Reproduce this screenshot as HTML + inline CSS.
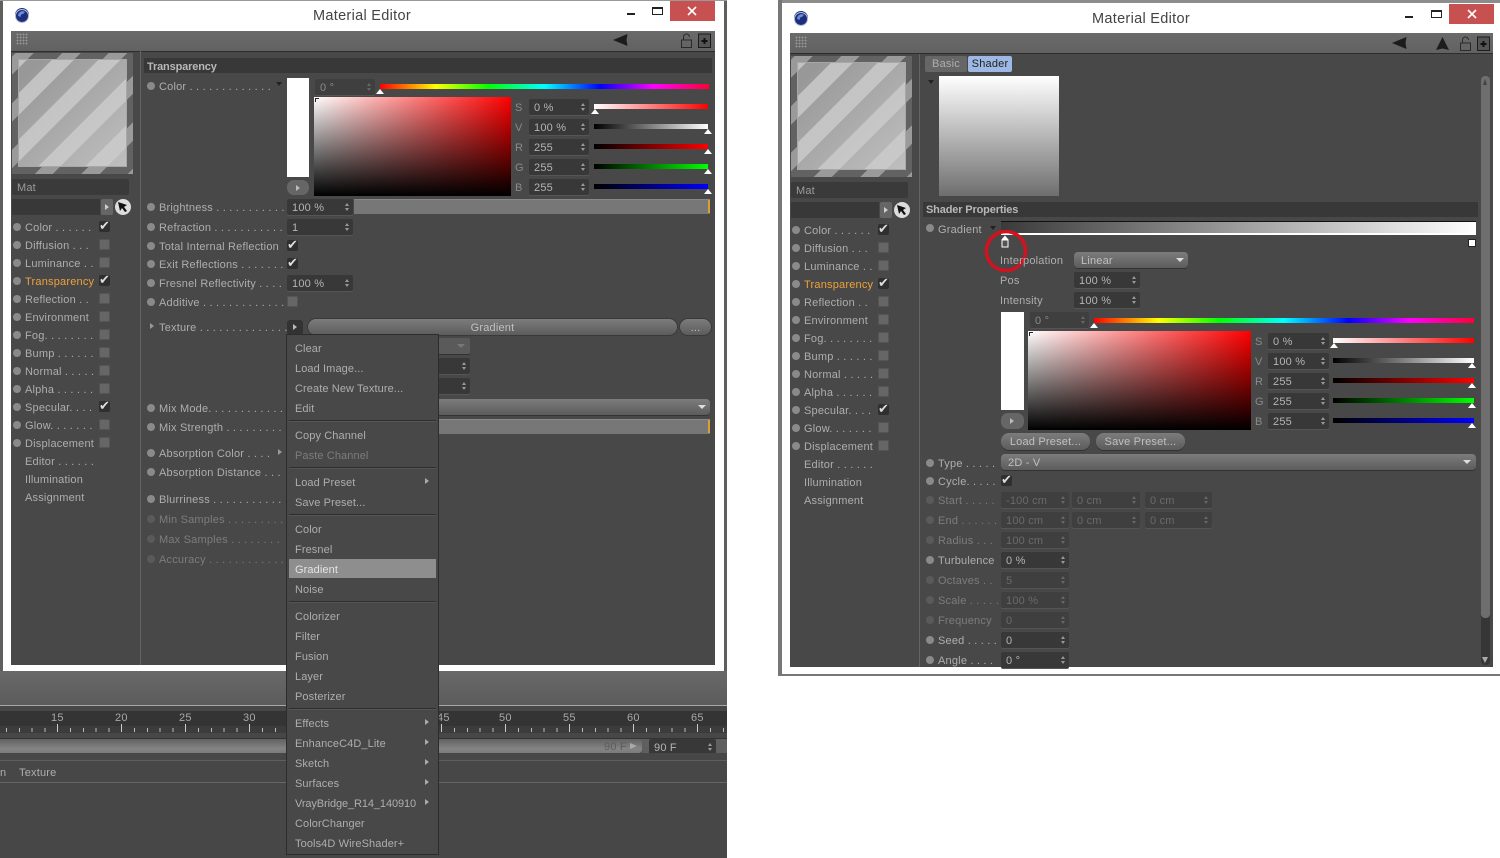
<!DOCTYPE html>
<html><head><meta charset="utf-8"><title>Material Editor</title>
<style>
html,body{margin:0;padding:0;background:#fff}
#p{position:relative;width:1500px;height:858px;overflow:hidden;background:#fff;font:11px "Liberation Sans",sans-serif;color:#aeaeae;letter-spacing:.2px}
#p div,#p span,#p svg{position:absolute}
.a{position:absolute}
.l{height:14px;line-height:16px;white-space:pre}
.b{width:8px;height:8px;border-radius:50%;background:#8a8a8a}
.bd{width:8px;height:8px;border-radius:50%;background:#5a5a5a}
.f{height:16px;line-height:18px;background:#383838;border-radius:2px;padding-left:5px;box-sizing:border-box;box-shadow:0 1px 0 #555;color:#b4b4b4;white-space:pre}
.f:before,.f:after{content:"";position:absolute;right:4px;border-left:2.5px solid transparent;border-right:2.5px solid transparent}
.f:before{top:4px;border-bottom:3px solid #999}
.f:after{top:9px;border-top:3px solid #999}
.fd{background:#3f3f3f;color:#6a6a6a}
.fd:before{border-bottom-color:#666}.fd:after{border-top-color:#666}
.c{width:11px;height:11px;border-radius:2px;background:#666;box-shadow:inset 0 0 0 1px #555}
.k{background:#2f2f2f;box-shadow:none;color:#ddd;font:13px/11px "DejaVu Sans",sans-serif;text-align:center;letter-spacing:0}
.s{height:5px}
.m{width:0;height:0;border-left:4px solid transparent;border-right:4px solid transparent;border-bottom:5px solid #fff}
.h{height:15px;line-height:17px;background:#383838;color:#b8b8b8;padding-left:3px;box-sizing:border-box;font-weight:bold;font-size:11px;letter-spacing:-.15px}
.g{background:linear-gradient(#7c7c7c,#5c5c5c);border-radius:4px;box-shadow:0 1px 0 #333;color:#c0c0c0}
.hue{background:linear-gradient(90deg,#f00,#ff0 17%,#0f0 33%,#0ff 50%,#00f 67%,#f0f 83%,#f03)}
.sq{background:linear-gradient(transparent,#000),linear-gradient(90deg,#fff,#f00)}
.sl{background:#777;box-shadow:inset 0 1px 0 #888}
.sl:after{content:"";position:absolute;right:0;top:1px;bottom:1px;width:2px;background:#d8a030}
.prev{background:repeating-linear-gradient(135deg,#626262 0 2.5px,#9a9a9a 2.5px 15.5px,#626262 15.5px 33px)}
.prev i{position:absolute;left:7px;top:7px;width:107px;height:106px;background:linear-gradient(135deg,rgba(200,200,200,0) 10%,rgba(204,204,204,.75)),repeating-linear-gradient(135deg,#c2c2c2 0 5.6px,#989898 5.6px 23px,#c2c2c2 23px 33px);box-shadow:0 0 0 1px #a8a8a8}
.mi{left:295px;height:14px;line-height:16px;color:#aeaeae;white-space:pre;letter-spacing:.1px}
.sep{left:289px;width:147px;height:1px;background:#2e2e2e;box-shadow:0 1px 0 #555}
.ar{left:425px;width:0;height:0;border-left:4px solid #aaa;border-top:3.5px solid transparent;border-bottom:3.5px solid transparent}
.tn{color:#a8a8a8;font-size:11px;top:712px;line-height:12px}
.gr{width:12px;height:12px;background:radial-gradient(circle,#959595 .8px,transparent 1px) 0 0/3px 3px}
</style></head><body><div id="p">

<!-- left screenshot background -->
<div style="left:0;top:0;width:727px;height:858px;background:#5f5f5f"></div>
<div style="left:0;top:0;width:727px;height:1px;background:#999"></div>
<div style="left:3px;top:1px;width:721px;height:670px;background:#fff"></div>
<div style="left:0;top:671px;width:727px;height:34px;background:linear-gradient(#686868,#5c5c5c)"></div>
<div style="left:0;top:705px;width:727px;height:1px;background:#a8a8a8"></div>
<div style="left:0;top:706px;width:727px;height:5px;background:#474747"></div>
<div style="left:0;top:711px;width:727px;height:16px;background:#343434"></div>
<div style="left:0;top:726px;width:727px;height:7px;background:#3c3c3c"></div>
<div style="left:0;top:728px;width:727px;height:4px;background:repeating-linear-gradient(90deg,#bbb 0 1px,transparent 1px 12.8px);background-position:6px 0"></div>
<div style="left:57px;top:724px;width:650px;height:8px;background:repeating-linear-gradient(90deg,#ccc 0 1px,transparent 1px 64px)"></div>
<div style="left:0;top:733px;width:727px;height:5px;background:#474747;box-shadow:0 1px 0 #333"></div>
<div style="left:0;top:739px;width:642px;height:14px;border-radius:0 3px 3px 0;background:linear-gradient(#626262,#848484 70%,#7a7a7a);box-shadow:0 1px 0 #333"></div>
<div class="l" style="left:604px;top:739px;color:#5c5c5c">90 F</div>
<div style="left:630px;top:743px;width:0;height:0;border-left:7px solid #aaa;border-top:3px solid transparent;border-bottom:3px solid transparent"></div>
<div class="f" style="left:649px;top:739px;width:67px">90 F</div>
<div style="left:0;top:753px;width:727px;height:105px;background:#474747"></div>
<div style="left:0;top:760px;width:727px;height:1px;background:#5e5e5e"></div>
<div style="left:0;top:782px;width:727px;height:1px;background:#666"></div>
<div class="l" style="left:0;top:765px">n</div>
<div class="l" style="left:19px;top:765px">Texture</div>
<div class="a tn" style="left:51px">15</div><div class="a tn" style="left:115px">20</div><div class="a tn" style="left:179px">25</div><div class="a tn" style="left:243px">30</div><div class="a tn" style="left:437px">45</div><div class="a tn" style="left:499px">50</div><div class="a tn" style="left:563px">55</div><div class="a tn" style="left:627px">60</div><div class="a tn" style="left:691px">65</div>

<!-- LEFT WINDOW -->
<div style="left:11px;top:31px;width:704px;height:634px;background:#484848"></div>
<div style="left:11px;top:31px;width:704px;height:20px;background:linear-gradient(#6a6a6a,#626262);box-shadow:0 1px 0 #2e2e2e"></div>
<div class="gr" style="left:16px;top:33px"></div>
<svg style="left:14px;top:7px" width="16" height="16" viewBox="0 0 16 16"><circle cx="8" cy="8" r="7" fill="#1b2f7a"/><circle cx="8" cy="9" r="6.5" fill="none" stroke="#b8bfd8" stroke-width="1"/><path d="M4 9a4.5 4.5 0 0 1 7-4l-2 2a2 2 0 0 0-2 3z" fill="#6d8be0"/></svg>
<div style="left:313px;top:7px;font-size:14.5px;line-height:18px;color:#444;letter-spacing:.3px">Material Editor</div>
<div style="left:627px;top:13px;width:8px;height:2px;background:#222"></div>
<div style="left:652px;top:7px;width:11px;height:8px;box-sizing:border-box;border:1px solid #222;border-top-width:2px"></div>
<div style="left:670px;top:1px;width:45px;height:20px;background:#c75050"></div>
<svg style="left:687px;top:6px" width="10" height="10" viewBox="0 0 10 10"><path d="M1 1l8 8M9 1l-8 8" stroke="#fff" stroke-width="1.6"/></svg>
<svg style="left:612px;top:33px" width="18" height="14" viewBox="0 0 18 14"><path d="M1 7L15.500 1 14.500 7 15.500 13z" fill="#1c1c1c"/></svg>
<svg style="left:680px;top:33px" width="14" height="16" viewBox="0 0 14 16"><rect x="1.5" y="7" width="10" height="7.5" fill="none" stroke="#2a2a2a"/><path d="M3.5 7V4a3 3 0 0 1 6 0" fill="none" stroke="#2a2a2a"/></svg>
<svg style="left:698px;top:33px" width="13" height="15" viewBox="0 0 13 15"><rect x=".5" y="1" width="12" height="13.5" fill="#555" stroke="#1c1c1c"/><path d="M6.5 5v6M3.5 8h6" stroke="#111" stroke-width="2"/></svg>

<div class="prev" style="left:12px;top:53px;width:121px;height:121px"><i></i></div>
<div style="left:140px;top:51px;width:1px;height:614px;background:#646464"></div>
<div class="a" style="left:12px;top:179px;width:117px;height:16px;background:#3a3a3a;border-radius:2px;line-height:19px;padding-left:5px;box-sizing:border-box;color:#9c9c9c">Mat</div>
<div style="left:12px;top:199px;width:88px;height:16px;background:#383838"></div>
<div style="left:101px;top:199px;width:12px;height:16px;background:#666;border-radius:2px"></div>
<div style="left:105px;top:204px;width:0;height:0;border-left:4px solid #ccc;border-top:3px solid transparent;border-bottom:3px solid transparent"></div>
<div style="left:115px;top:199px;width:16px;height:16px;border-radius:50%;background:#ddd"></div>
<svg style="left:117px;top:201px" width="12" height="12" viewBox="0 0 12 12"><path d="M1 1l9 3-3 2 3 4-2 1-3-4-2 3z" fill="#111"/></svg>

<div class="b" style="left:13px;top:223px"></div><div class="l" style="left:25px;top:220px">Color . . . . . .</div><div class="c k" style="left:99px;top:221px">✔</div>
<div class="b" style="left:13px;top:241px"></div><div class="l" style="left:25px;top:238px">Diffusion . . .</div><div class="c" style="left:99px;top:239px"></div>
<div class="b" style="left:13px;top:259px"></div><div class="l" style="left:25px;top:256px">Luminance . .</div><div class="c" style="left:99px;top:257px"></div>
<div class="b" style="left:13px;top:277px"></div><div class="l" style="left:25px;top:274px;color:#eda23a">Transparency</div><div class="c k" style="left:99px;top:275px">✔</div>
<div class="b" style="left:13px;top:295px"></div><div class="l" style="left:25px;top:292px">Reflection . .</div><div class="c" style="left:99px;top:293px"></div>
<div class="b" style="left:13px;top:313px"></div><div class="l" style="left:25px;top:310px">Environment</div><div class="c" style="left:99px;top:311px"></div>
<div class="b" style="left:13px;top:331px"></div><div class="l" style="left:25px;top:328px">Fog. . . . . . . .</div><div class="c" style="left:99px;top:329px"></div>
<div class="b" style="left:13px;top:349px"></div><div class="l" style="left:25px;top:346px">Bump . . . . . .</div><div class="c" style="left:99px;top:347px"></div>
<div class="b" style="left:13px;top:367px"></div><div class="l" style="left:25px;top:364px">Normal . . . . .</div><div class="c" style="left:99px;top:365px"></div>
<div class="b" style="left:13px;top:385px"></div><div class="l" style="left:25px;top:382px">Alpha . . . . . .</div><div class="c" style="left:99px;top:383px"></div>
<div class="b" style="left:13px;top:403px"></div><div class="l" style="left:25px;top:400px">Specular. . . .</div><div class="c k" style="left:99px;top:401px">✔</div>
<div class="b" style="left:13px;top:421px"></div><div class="l" style="left:25px;top:418px">Glow. . . . . . .</div><div class="c" style="left:99px;top:419px"></div>
<div class="b" style="left:13px;top:439px"></div><div class="l" style="left:25px;top:436px">Displacement</div><div class="c" style="left:99px;top:437px"></div>
<div class="l" style="left:25px;top:454px">Editor . . . . . .</div>
<div class="l" style="left:25px;top:472px">Illumination</div>
<div class="l" style="left:25px;top:490px">Assignment</div>

<div class="h" style="left:144px;top:58px;width:568px;line-height:18px">Transparency</div>
<div class="b" style="left:147px;top:82px"></div><div class="l" style="left:159px;top:79px">Color . . . . . . . . . . . . .</div>
<div style="left:276px;top:82px;width:0;height:0;border-top:4px solid #222;border-left:3px solid transparent;border-right:3px solid transparent"></div>
<div style="left:287px;top:78px;width:22px;height:99px;background:#fff"></div>
<div style="left:287px;top:180px;width:22px;height:15px;border-radius:7px;background:#666"></div>
<div style="left:296px;top:185px;width:0;height:0;border-left:4px solid #bbb;border-top:3px solid transparent;border-bottom:3px solid transparent"></div>
<div class="f fd" style="left:315px;top:79px;width:60px;color:#8a8a8a">0 °</div>
<div class="s hue" style="left:380px;top:84px;width:329px"></div><div class="m" style="left:376px;top:89px"></div>
<div class="sq" style="left:314px;top:97px;width:197px;height:99px"></div>
<div style="left:315px;top:98px;width:3px;height:3px;border-left:1px solid #222;border-top:1px solid #222"></div>

<div class="l" style="left:515px;top:100px;color:#8a8a8a">S</div><div class="f" style="left:529px;top:99px;width:60px">0 %</div>
<div class="s" style="left:594px;top:104px;width:114px;background:linear-gradient(90deg,#fff,#f00)"></div><div class="m" style="left:591px;top:109px"></div>
<div class="l" style="left:515px;top:120px;color:#8a8a8a">V</div><div class="f" style="left:529px;top:119px;width:60px">100 %</div>
<div class="s" style="left:594px;top:124px;width:114px;background:linear-gradient(90deg,#000,#fff)"></div><div class="m" style="left:704px;top:129px"></div>
<div class="l" style="left:515px;top:140px;color:#8a8a8a">R</div><div class="f" style="left:529px;top:139px;width:60px">255</div>
<div class="s" style="left:594px;top:144px;width:114px;background:linear-gradient(90deg,#000,#f00)"></div><div class="m" style="left:704px;top:149px"></div>
<div class="l" style="left:515px;top:160px;color:#8a8a8a">G</div><div class="f" style="left:529px;top:159px;width:60px">255</div>
<div class="s" style="left:594px;top:164px;width:114px;background:linear-gradient(90deg,#000,#0f0)"></div><div class="m" style="left:704px;top:169px"></div>
<div class="l" style="left:515px;top:180px;color:#8a8a8a">B</div><div class="f" style="left:529px;top:179px;width:60px">255</div>
<div class="s" style="left:594px;top:184px;width:114px;background:linear-gradient(90deg,#000,#00f)"></div><div class="m" style="left:704px;top:189px"></div>

<div class="b" style="left:147px;top:203px"></div><div class="l" style="left:159px;top:200px">Brightness . . . . . . . . . . .</div>
<div class="f" style="left:287px;top:199px;width:66px">100 %</div><div class="sl" style="left:354px;top:199px;width:356px;height:15px"></div>
<div class="b" style="left:147px;top:223px"></div><div class="l" style="left:159px;top:220px">Refraction . . . . . . . . . . .</div>
<div class="f" style="left:287px;top:219px;width:66px">1</div>
<div class="b" style="left:147px;top:242px"></div><div class="l" style="left:159px;top:239px">Total Internal Reflection</div><div class="c k" style="left:287px;top:240px">✔</div>
<div class="b" style="left:147px;top:260px"></div><div class="l" style="left:159px;top:257px">Exit Reflections . . . . . . .</div><div class="c k" style="left:287px;top:258px">✔</div>
<div class="b" style="left:147px;top:279px"></div><div class="l" style="left:159px;top:276px">Fresnel Reflectivity . . . .</div>
<div class="f" style="left:287px;top:275px;width:66px">100 %</div>
<div class="b" style="left:147px;top:298px"></div><div class="l" style="left:159px;top:295px">Additive . . . . . . . . . . . . .</div><div class="c" style="left:287px;top:296px"></div>
<div style="left:150px;top:323px;width:0;height:0;border-left:4px solid #999;border-top:3.5px solid transparent;border-bottom:3.5px solid transparent"></div>
<div class="l" style="left:159px;top:320px">Texture . . . . . . . . . . . . . .</div>
<div style="left:287px;top:320px;width:16px;height:15px;background:#333;border-radius:3px"></div>
<div style="left:293px;top:324px;width:0;height:0;border-left:4px solid #bbb;border-top:3px solid transparent;border-bottom:3px solid transparent"></div>
<div class="g" style="left:308px;top:319px;width:369px;height:16px;line-height:19px;text-align:center;border-radius:8px;box-shadow:0 0 0 1px #3a3a3a">Gradient</div>
<div class="g" style="left:680px;top:319px;width:31px;height:16px;line-height:19px;text-align:center;border-radius:8px;box-shadow:0 0 0 1px #3a3a3a">...</div>
<div class="g" style="left:420px;top:338px;width:50px;height:16px;background:#5a5a5a;border-radius:2px"></div>
<div style="left:457px;top:344px;width:0;height:0;border-top:4px solid #777;border-left:4px solid transparent;border-right:4px solid transparent"></div>
<div class="f" style="left:420px;top:358px;width:50px"></div>
<div class="f" style="left:420px;top:378px;width:50px"></div>
<div class="b" style="left:147px;top:404px"></div><div class="l" style="left:159px;top:401px">Mix Mode. . . . . . . . . . . .</div>
<div class="g" style="left:420px;top:399px;width:290px;height:16px"></div>
<div style="left:698px;top:405px;width:0;height:0;border-top:4px solid #ddd;border-left:4px solid transparent;border-right:4px solid transparent"></div>
<div class="b" style="left:147px;top:423px"></div><div class="l" style="left:159px;top:420px">Mix Strength . . . . . . . . .</div>
<div class="sl" style="left:420px;top:419px;width:290px;height:15px"></div>
<div class="b" style="left:147px;top:449px"></div><div class="l" style="left:159px;top:446px">Absorption Color . . . .</div>
<div style="left:278px;top:449px;width:0;height:0;border-left:4px solid #999;border-top:3.5px solid transparent;border-bottom:3.5px solid transparent"></div>
<div class="b" style="left:147px;top:468px"></div><div class="l" style="left:159px;top:465px">Absorption Distance . . .</div>
<div class="b" style="left:147px;top:495px"></div><div class="l" style="left:159px;top:492px">Blurriness . . . . . . . . . . .</div>
<div class="bd" style="left:147px;top:515px"></div><div class="l" style="left:159px;top:512px;color:#7c7c7c">Min Samples . . . . . . . . .</div>
<div class="bd" style="left:147px;top:535px"></div><div class="l" style="left:159px;top:532px;color:#7c7c7c">Max Samples . . . . . . . .</div>
<div class="bd" style="left:147px;top:555px"></div><div class="l" style="left:159px;top:552px;color:#7c7c7c">Accuracy . . . . . . . . . . . .</div>

<!-- dropdown menu -->
<div style="left:287px;top:335px;width:151px;height:519px;background:#484848;box-shadow:0 0 0 1px #2c2c2c"></div>
<div class="mi" style="top:341px">Clear</div>
<div class="mi" style="top:361px">Load Image...</div>
<div class="mi" style="top:381px">Create New Texture...</div>
<div class="mi" style="top:401px">Edit</div>
<div class="sep" style="top:420px"></div>
<div class="mi" style="top:428px">Copy Channel</div>
<div class="mi" style="top:448px;color:#7c7c7c">Paste Channel</div>
<div class="sep" style="top:467px"></div>
<div class="mi" style="top:475px">Load Preset</div><div class="ar" style="top:478px"></div>
<div class="mi" style="top:495px">Save Preset...</div>
<div class="sep" style="top:514px"></div>
<div class="mi" style="top:522px">Color</div>
<div class="mi" style="top:542px">Fresnel</div>
<div style="left:289px;top:559px;width:147px;height:19px;background:#8e8e8e"></div>
<div class="mi" style="top:562px;color:#e4e4e4">Gradient</div>
<div class="mi" style="top:582px">Noise</div>
<div class="sep" style="top:601px"></div>
<div class="mi" style="top:609px">Colorizer</div>
<div class="mi" style="top:629px">Filter</div>
<div class="mi" style="top:649px">Fusion</div>
<div class="mi" style="top:669px">Layer</div>
<div class="mi" style="top:689px">Posterizer</div>
<div class="sep" style="top:708px"></div>
<div class="mi" style="top:716px">Effects</div><div class="ar" style="top:719px"></div>
<div class="mi" style="top:736px">EnhanceC4D_Lite</div><div class="ar" style="top:739px"></div>
<div class="mi" style="top:756px">Sketch</div><div class="ar" style="top:759px"></div>
<div class="mi" style="top:776px">Surfaces</div><div class="ar" style="top:779px"></div>
<div class="mi" style="top:796px;letter-spacing:-.1px">VrayBridge_R14_140910</div><div class="ar" style="top:799px"></div>
<div class="mi" style="top:816px">ColorChanger</div>
<div class="mi" style="top:836px">Tools4D WireShader+</div>

<!-- RIGHT WINDOW -->
<div style="left:778px;top:0;width:4px;height:676px;background:#777"></div>
<div style="left:782px;top:0;width:718px;height:3px;background:#8c8c8c"></div>
<div style="left:778px;top:674px;width:722px;height:2px;background:#777"></div>
<div style="left:790px;top:33px;width:703px;height:634px;background:#484848"></div>
<div style="left:790px;top:33px;width:703px;height:20px;background:linear-gradient(#6a6a6a,#626262);box-shadow:0 1px 0 #2e2e2e"></div>
<div class="gr" style="left:795px;top:36px"></div>
<svg style="left:793px;top:10px" width="16" height="16" viewBox="0 0 16 16"><circle cx="8" cy="8" r="7" fill="#1b2f7a"/><circle cx="8" cy="9" r="6.5" fill="none" stroke="#b8bfd8" stroke-width="1"/><path d="M4 9a4.5 4.5 0 0 1 7-4l-2 2a2 2 0 0 0-2 3z" fill="#6d8be0"/></svg>
<div style="left:1092px;top:10px;font-size:14.5px;line-height:18px;color:#444;letter-spacing:.3px">Material Editor</div>
<div style="left:1405px;top:16px;width:8px;height:2px;background:#222"></div>
<div style="left:1431px;top:10px;width:11px;height:8px;box-sizing:border-box;border:1px solid #222;border-top-width:2px"></div>
<div style="left:1449px;top:4px;width:45px;height:20px;background:#c75050"></div>
<svg style="left:1467px;top:9px" width="10" height="10" viewBox="0 0 10 10"><path d="M1 1l8 8M9 1l-8 8" stroke="#fff" stroke-width="1.6"/></svg>
<svg style="left:1391px;top:36px" width="18" height="14" viewBox="0 0 18 14"><path d="M1 7L15.500 1 14.500 7 15.500 13z" fill="#1c1c1c"/></svg>
<svg style="left:1435px;top:36px" width="15" height="15" viewBox="0 0 15 15"><path d="M7.500 1L14 14 7.500 12.500 1 14z" fill="#1c1c1c"/></svg>
<svg style="left:1459px;top:36px" width="14" height="16" viewBox="0 0 14 16"><rect x="1.500" y="7" width="10" height="7.500" fill="none" stroke="#2a2a2a"/><path d="M3.500 7V4a3 3 0 0 1 6 0" fill="none" stroke="#2a2a2a"/></svg>
<svg style="left:1477px;top:36px" width="13" height="15" viewBox="0 0 13 15"><rect x=".5" y="1" width="12" height="13.500" fill="#555" stroke="#1c1c1c"/><path d="M6.500 5v6M3.500 8h6" stroke="#111" stroke-width="2"/></svg>

<div class="prev" style="left:791px;top:56px;width:121px;height:121px"><i></i></div>
<div style="left:919px;top:54px;width:1px;height:613px;background:#646464"></div>
<div class="a" style="left:791px;top:182px;width:117px;height:16px;background:#3a3a3a;border-radius:2px;line-height:19px;padding-left:5px;box-sizing:border-box;color:#9c9c9c">Mat</div>
<div style="left:791px;top:202px;width:88px;height:16px;background:#383838"></div>
<div style="left:880px;top:202px;width:12px;height:16px;background:#666;border-radius:2px"></div>
<div style="left:884px;top:207px;width:0;height:0;border-left:4px solid #ccc;border-top:3px solid transparent;border-bottom:3px solid transparent"></div>
<div style="left:894px;top:202px;width:16px;height:16px;border-radius:50%;background:#ddd"></div>
<svg style="left:896px;top:204px" width="12" height="12" viewBox="0 0 12 12"><path d="M1 1l9 3-3 2 3 4-2 1-3-4-2 3z" fill="#111"/></svg>

<div class="b" style="left:792px;top:226px"></div><div class="l" style="left:804px;top:223px">Color . . . . . .</div><div class="c k" style="left:878px;top:224px">✔</div>
<div class="b" style="left:792px;top:244px"></div><div class="l" style="left:804px;top:241px">Diffusion . . .</div><div class="c" style="left:878px;top:242px"></div>
<div class="b" style="left:792px;top:262px"></div><div class="l" style="left:804px;top:259px">Luminance . .</div><div class="c" style="left:878px;top:260px"></div>
<div class="b" style="left:792px;top:280px"></div><div class="l" style="left:804px;top:277px;color:#eda23a">Transparency</div><div class="c k" style="left:878px;top:278px">✔</div>
<div class="b" style="left:792px;top:298px"></div><div class="l" style="left:804px;top:295px">Reflection . .</div><div class="c" style="left:878px;top:296px"></div>
<div class="b" style="left:792px;top:316px"></div><div class="l" style="left:804px;top:313px">Environment</div><div class="c" style="left:878px;top:314px"></div>
<div class="b" style="left:792px;top:334px"></div><div class="l" style="left:804px;top:331px">Fog. . . . . . . .</div><div class="c" style="left:878px;top:332px"></div>
<div class="b" style="left:792px;top:352px"></div><div class="l" style="left:804px;top:349px">Bump . . . . . .</div><div class="c" style="left:878px;top:350px"></div>
<div class="b" style="left:792px;top:370px"></div><div class="l" style="left:804px;top:367px">Normal . . . . .</div><div class="c" style="left:878px;top:368px"></div>
<div class="b" style="left:792px;top:388px"></div><div class="l" style="left:804px;top:385px">Alpha . . . . . .</div><div class="c" style="left:878px;top:386px"></div>
<div class="b" style="left:792px;top:406px"></div><div class="l" style="left:804px;top:403px">Specular. . . .</div><div class="c k" style="left:878px;top:404px">✔</div>
<div class="b" style="left:792px;top:424px"></div><div class="l" style="left:804px;top:421px">Glow. . . . . . .</div><div class="c" style="left:878px;top:422px"></div>
<div class="b" style="left:792px;top:442px"></div><div class="l" style="left:804px;top:439px">Displacement</div><div class="c" style="left:878px;top:440px"></div>
<div class="l" style="left:804px;top:457px">Editor . . . . . .</div>
<div class="l" style="left:804px;top:475px">Illumination</div>
<div class="l" style="left:804px;top:493px">Assignment</div>

<div class="l" style="left:925px;top:56px;width:42px;height:16px;line-height:17px;background:#666;text-align:center;border-radius:2px">Basic</div>
<div class="l" style="left:968px;top:56px;width:44px;height:16px;line-height:17px;background:#9db8e4;color:#222;text-align:center;border-radius:2px">Shader</div>
<div style="left:928px;top:80px;width:0;height:0;border-top:4px solid #222;border-left:3.500px solid transparent;border-right:3.500px solid transparent"></div>
<div style="left:939px;top:76px;width:120px;height:120px;background:linear-gradient(#fff,#6e6e6e)"></div>
<div class="h" style="left:923px;top:202px;width:555px">Shader Properties</div>
<div class="b" style="left:926px;top:224px"></div><div class="l" style="left:938px;top:222px">Gradient</div>
<div style="left:990px;top:226px;width:0;height:0;border-top:4px solid #222;border-left:3.500px solid transparent;border-right:3.500px solid transparent"></div>
<div style="left:1001px;top:221px;width:475px;height:14px;box-sizing:border-box;border-top:1px solid #111;border-bottom:2px solid #fff;background:linear-gradient(90deg,#3a3a3a,#fff)"></div>
<svg style="left:1001px;top:235px" width="8" height="13" viewBox="0 0 8 13"><path d="M4 .5L7.500 4.500V12.500H.5V4.500z" fill="#fff"/><rect x="1.500" y="5.500" width="5" height="6" fill="#555"/></svg>
<div style="left:1468px;top:239px;width:8px;height:8px;box-sizing:border-box;border:1px solid #222;background:#fff"></div>
<svg style="left:982px;top:227px" width="48" height="48" viewBox="0 0 48 48"><circle cx="24" cy="24" r="19.500" fill="none" stroke="#d3121f" stroke-width="3.500"/></svg>
<div class="l" style="left:1000px;top:253px">Interpolation</div>
<div class="g" style="left:1074px;top:252px;width:114px;height:16px;line-height:18px;padding-left:7px;box-sizing:border-box">Linear</div>
<div style="left:1176px;top:258px;width:0;height:0;border-top:4px solid #ddd;border-left:4px solid transparent;border-right:4px solid transparent"></div>
<div class="l" style="left:1000px;top:273px">Pos</div><div class="f" style="left:1074px;top:272px;width:66px">100 %</div>
<div class="l" style="left:1000px;top:293px">Intensity</div><div class="f" style="left:1074px;top:292px;width:66px">100 %</div>
<div style="left:1001px;top:312px;width:23px;height:98px;background:#fff"></div>
<div style="left:1001px;top:413px;width:23px;height:16px;border-radius:7px;background:#666"></div>
<div style="left:1010px;top:418px;width:0;height:0;border-left:4px solid #bbb;border-top:3px solid transparent;border-bottom:3px solid transparent"></div>
<div class="f fd" style="left:1030px;top:312px;width:59px;color:#8a8a8a">0 °</div>
<div class="s hue" style="left:1094px;top:318px;width:380px"></div><div class="m" style="left:1090px;top:323px"></div>
<div class="sq" style="left:1028px;top:331px;width:223px;height:99px"></div>
<div style="left:1029px;top:332px;width:3px;height:3px;border-left:1px solid #222;border-top:1px solid #222"></div>

<div class="l" style="left:1255px;top:334px;color:#8a8a8a">S</div><div class="f" style="left:1268px;top:333px;width:61px">0 %</div>
<div class="s" style="left:1333px;top:338px;width:141px;background:linear-gradient(90deg,#fff,#f00)"></div><div class="m" style="left:1330px;top:343px"></div>
<div class="l" style="left:1255px;top:354px;color:#8a8a8a">V</div><div class="f" style="left:1268px;top:353px;width:61px">100 %</div>
<div class="s" style="left:1333px;top:358px;width:141px;background:linear-gradient(90deg,#000,#fff)"></div><div class="m" style="left:1468px;top:363px"></div>
<div class="l" style="left:1255px;top:374px;color:#8a8a8a">R</div><div class="f" style="left:1268px;top:373px;width:61px">255</div>
<div class="s" style="left:1333px;top:378px;width:141px;background:linear-gradient(90deg,#000,#f00)"></div><div class="m" style="left:1468px;top:383px"></div>
<div class="l" style="left:1255px;top:394px;color:#8a8a8a">G</div><div class="f" style="left:1268px;top:393px;width:61px">255</div>
<div class="s" style="left:1333px;top:398px;width:141px;background:linear-gradient(90deg,#000,#0f0)"></div><div class="m" style="left:1468px;top:403px"></div>
<div class="l" style="left:1255px;top:414px;color:#8a8a8a">B</div><div class="f" style="left:1268px;top:413px;width:61px">255</div>
<div class="s" style="left:1333px;top:418px;width:141px;background:linear-gradient(90deg,#000,#00f)"></div><div class="m" style="left:1468px;top:423px"></div>

<div class="g" style="left:1001px;top:433px;width:89px;height:17px;line-height:19px;text-align:center;border-radius:8px">Load Preset...</div>
<div class="g" style="left:1096px;top:433px;width:89px;height:17px;line-height:19px;text-align:center;border-radius:8px">Save Preset...</div>
<div class="b" style="left:926px;top:459px"></div><div class="l" style="left:938px;top:456px">Type . . . . .</div>
<div class="g" style="left:1001px;top:454px;width:475px;height:16px;line-height:18px;padding-left:7px;box-sizing:border-box">2D - V</div>
<div style="left:1463px;top:460px;width:0;height:0;border-top:4px solid #ddd;border-left:4px solid transparent;border-right:4px solid transparent"></div>
<div class="b" style="left:926px;top:477px"></div><div class="l" style="left:938px;top:474px">Cycle. . . . .</div><div class="c k" style="left:1001px;top:475px">✔</div>
<div class="bd" style="left:926px;top:496px"></div><div class="l" style="left:938px;top:493px;color:#7c7c7c">Start . . . . .</div>
<div class="f fd" style="left:1001px;top:492px;width:68px">-100 cm</div><div class="f fd" style="left:1072px;top:492px;width:68px">0 cm</div><div class="f fd" style="left:1145px;top:492px;width:67px">0 cm</div>
<div class="bd" style="left:926px;top:516px"></div><div class="l" style="left:938px;top:513px;color:#7c7c7c">End . . . . . .</div>
<div class="f fd" style="left:1001px;top:512px;width:68px">100 cm</div><div class="f fd" style="left:1072px;top:512px;width:68px">0 cm</div><div class="f fd" style="left:1145px;top:512px;width:67px">0 cm</div>
<div class="bd" style="left:926px;top:536px"></div><div class="l" style="left:938px;top:533px;color:#7c7c7c">Radius . . .</div>
<div class="f fd" style="left:1001px;top:532px;width:68px">100 cm</div>
<div class="b" style="left:926px;top:556px"></div><div class="l" style="left:938px;top:553px">Turbulence</div>
<div class="f" style="left:1001px;top:552px;width:68px">0 %</div>
<div class="bd" style="left:926px;top:576px"></div><div class="l" style="left:938px;top:573px;color:#7c7c7c">Octaves . .</div>
<div class="f fd" style="left:1001px;top:572px;width:68px">5</div>
<div class="bd" style="left:926px;top:596px"></div><div class="l" style="left:938px;top:593px;color:#7c7c7c">Scale . . . . .</div>
<div class="f fd" style="left:1001px;top:592px;width:68px">100 %</div>
<div class="bd" style="left:926px;top:616px"></div><div class="l" style="left:938px;top:613px;color:#7c7c7c">Frequency</div>
<div class="f fd" style="left:1001px;top:612px;width:68px">0</div>
<div class="b" style="left:926px;top:636px"></div><div class="l" style="left:938px;top:633px">Seed . . . . .</div>
<div class="f" style="left:1001px;top:632px;width:68px">0</div>
<div class="b" style="left:926px;top:656px"></div><div class="l" style="left:938px;top:653px">Angle . . . .</div>
<div class="f" style="left:1001px;top:652px;width:68px">0 °</div>

<div style="left:1481px;top:76px;width:9px;height:589px;background:#363636;border-radius:4px"></div>
<div style="left:1481px;top:76px;width:9px;height:542px;background:#6e6e6e;border-radius:4px"></div>
<div style="left:1483px;top:79px;width:0;height:0;border-bottom:6px solid #444;border-left:2.500px solid transparent;border-right:2.500px solid transparent"></div>
<div style="left:1482px;top:657px;width:0;height:0;border-top:6px solid #aaa;border-left:3.500px solid transparent;border-right:3.500px solid transparent"></div>

</div></body></html>
